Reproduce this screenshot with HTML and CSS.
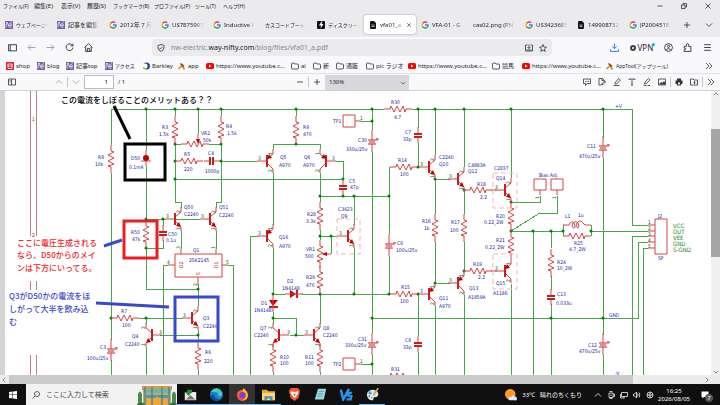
FILE: index.html
```html
<!DOCTYPE html>
<html lang="ja">
<head>
    <meta charset="UTF-8">
    <meta name="viewport" content="width=device-width, initial-scale=1.0">
    <title>vfa01_a.pdf</title>
    <link rel="stylesheet" href="styles.css">
</head>
<body>
    <!-- Shared icons -->
    <svg class="sprite" aria-hidden="true">
        <symbol id="i-google" viewBox="0 0 16 16"><g fill="none" stroke-width="3"><path stroke="#ea4335" d="M3 5a6 6 0 0 1 9.500-1.500"/><path stroke="#fbbc05" d="M3 11a6 6 0 0 1 0-6"/><path stroke="#34a853" d="M3 11a6 6 0 0 0 9.500 1.500"/><path stroke="#4285f4" d="M12.500 12.500A6 6 0 0 0 14 8H8"/></g></symbol>
        <symbol id="i-nifty" viewBox="0 0 16 16"><path fill="#74619f" d="M0 0h16v16H0z"/><path fill="none" stroke="#e4dcf5" stroke-width="1.800" d="M2 13V6q3-3 4 0v3M8 9h5q0-4-3-4t-3 5q1 4 6 2M2 3h4M11 2h3"/></symbol>
        <symbol id="i-doc" viewBox="0 0 16 16"><path fill="#15141a" d="M2 2q0-2 2-2h6l4 4v10q0 2-2 2H4q-2 0-2-2z"/><path stroke="#ddd" stroke-width="1.500" d="M5 8h6M5 11h6"/></symbol>
        <symbol id="i-bolt" viewBox="0 0 16 16"><rect width="16" height="16" rx="2" fill="#111"/><path fill="#fff" d="M9 1 4 9h4l-1 6 6-9H9l2-5z"/></symbol>
        <symbol id="i-yt" viewBox="0 0 16 16"><rect y="2" width="16" height="12" rx="3" fill="#f00"/><path fill="#fff" d="m6 5 5 3-5 3z"/></symbol>
        <symbol id="i-folder" viewBox="0 0 16 16"><path class="line" d="M1 4q0-2 2-2h3l2 2h5q2 0 2 2v6q0 2-2 2H3q-2 0-2-2z"/></symbol>
        <symbol id="i-app" viewBox="0 0 16 16"><path stroke="#d9822b" stroke-width="3" d="m1 14 9-9M7 6l6 9"/><path stroke="#6b4423" stroke-width="3" d="m5 3 7 6"/></symbol>
        <symbol id="i-panel" viewBox="0 0 16 16"><path class="line" d="M1 2h14v12H1zM7 2v12M3 5h2M3 8h2"/></symbol>
        <symbol id="i-up" viewBox="0 0 16 16"><path class="line" d="m2 11 6-6 6 6"/></symbol>
        <symbol id="i-down" viewBox="0 0 16 16"><path class="line" d="m2 5 6 6 6-6"/></symbol>
        <symbol id="i-more" viewBox="0 0 16 16"><path class="line" d="m2 2 6 6-6 6M8 2l6 6-6 6"/></symbol>
        <symbol id="i-plus" viewBox="0 0 16 16"><path class="line" d="M8 2v12M2 8h12"/></symbol>
        <symbol id="i-minus" viewBox="0 0 16 16"><path class="line" d="M2 8h12"/></symbol>
    </svg>

    <header class="chrome">
        <nav class="menubar">
            <a href="#" class="kana">ファイル(F)</a>
            <a href="#">編集(E)</a>
            <a href="#">表示(V)</a>
            <a href="#">履歴(S)</a>
            <a href="#" class="kana">ブックマーク(B)</a>
            <a href="#" class="kana">プロファイル(P)</a>
            <a href="#" class="kana">ツール(T)</a>
            <a href="#" class="kana">ヘルプ(H)</a>
            <div class="window-buttons">
                <button aria-label="最小化"><svg viewBox="0 0 16 16"><path class="line" d="M3 8h10"/></svg></button>
                <button aria-label="元に戻す"><svg viewBox="0 0 16 16"><path class="line" d="M3 6h7v7H3zM6 6V3h7v7h-3"/></svg></button>
                <button aria-label="閉じる"><svg viewBox="0 0 16 16"><path class="line" d="m3 3 10 10M13 3 3 13"/></svg></button>
            </div>
        </nav>

        <div class="tabs">
            <button class="tab"><svg><use href="#i-nifty"/></svg><span class="kana">ウェブページ管</span></button>
            <button class="tab"><svg><use href="#i-nifty"/></svg><span>記事を編集</span></button>
            <button class="tab"><svg><use href="#i-google"/></svg><span>2012年 7 月</span></button>
            <button class="tab"><svg><use href="#i-google"/></svg><span>US7875907</span></button>
            <button class="tab"><svg><use href="#i-google"/></svg><span>Inductive l</span></button>
            <button class="tab"><span class="kana">カスコードブートス</span></button>
            <button class="tab"><svg><use href="#i-bolt"/></svg><span class="kana">ディスクリート</span></button>
            <button class="tab active"><svg><use href="#i-doc"/></svg><span>vfa01_a.</span><svg class="close" viewBox="0 0 16 16"><path class="line" d="m3 3 10 10M13 3 3 13"/></svg></button>
            <button class="tab"><svg><use href="#i-google"/></svg><span>VFA-01 - G</span></button>
            <button class="tab"><span>cas02.png (PN</span></button>
            <button class="tab"><svg><use href="#i-google"/></svg><span>US3423685</span></button>
            <button class="tab"><svg><use href="#i-doc"/></svg><span>149908732</span></button>
            <button class="tab"><svg><use href="#i-google"/></svg><span>JP2004515</span></button>
            <button class="tab-tool" aria-label="新しいタブ"><svg><use href="#i-plus"/></svg></button>
            <button class="tab-tool" aria-label="タブ一覧"><svg><use href="#i-down"/></svg></button>
        </div>

        <div class="navbar">
            <div class="nav-buttons">
                <button aria-label="サイドバー"><svg viewBox="0 0 16 16"><path class="line" d="M1 3h14v11H1zM4 3v11"/></svg></button>
                <button aria-label="戻る" class="dim"><svg viewBox="0 0 16 16"><path class="line" d="M15 8H2m5-5L2 8l5 5"/></svg></button>
                <button aria-label="進む" class="dim"><svg viewBox="0 0 16 16"><path class="line" d="M1 8h13M9 3l5 5-5 5"/></svg></button>
                <button aria-label="再読み込み"><svg viewBox="0 0 16 16"><path class="line" d="M14 8a6 6 0 1 1-2-5l2 2M14 1v4h-4"/></svg></button>
                <button aria-label="ホーム"><svg viewBox="0 0 16 16"><path class="line" d="m1 8 7-7 7 7M3 7v8h10V7M6 15v-5h4v5"/></svg></button>
            </div>
            <div class="urlbar">
                <svg viewBox="0 0 16 16"><path class="line" d="M8 1 2 3v5q1 5 6 7 5-2 6-7V3zM5 8l2 2 4-4"/></svg>
                <a class="url" href="#">nw-electric.<b>way-nifty.com</b>/blog/files/vfa01_a.pdf</a>
                <svg viewBox="0 0 16 16"><path class="line" d="M5 2H1v12h14V2h-4M8 1v8M5 6l3 3 3-3M3 12h10"/></svg>
                <svg viewBox="0 0 16 16"><path class="line" d="m8 1 2 5 5 .5-4 3.500 1.500 5L8 12l-4.500 3L5 10 1 6.500 6 6z"/></svg>
            </div>
            <div class="nav-tools">
                <button aria-label="ダウンロード" class="download"><svg viewBox="0 0 16 16"><path class="line" d="M8 1v9M4 6l4 4 4-4M1 11v4h14v-4"/></svg></button>
                <button class="vpn"><i></i>VPN</button>
                <button aria-label="アカウント"><svg viewBox="0 0 16 16"><circle class="line" cx="8" cy="8" r="7"/><circle class="line" cx="8" cy="6" r="2"/><path class="line" d="M4 12q4-4 8 0"/></svg></button>
                <button aria-label="拡張機能"><svg viewBox="0 0 16 16"><path class="line" d="M2 6h4V4q0-3 2-3t2 3v2h4v9H2v-3q3 0 3-1.500T2 9z"/></svg></button>
                <button aria-label="メニュー"><svg viewBox="0 0 16 16"><path class="line" d="M2 3h12M2 8h12M2 13h12"/></svg></button>
            </div>
        </div>

        <nav class="bookmarks">
            <a href="#"><svg viewBox="0 0 16 16"><path fill="#d5222b" d="M0 0h16v16H0z"/><path fill="none" stroke="#fff" stroke-width="1.500" d="M3 4h10M3 8h10M4 4v9h8V4"/></svg>shop</a>
            <a href="#"><svg><use href="#i-nifty"/></svg>blog</a>
            <a href="#"><svg><use href="#i-nifty"/></svg>記事top</a>
            <a href="#" class="kana"><svg><use href="#i-nifty"/></svg>アクセス</a>
            <a href="#"><svg viewBox="0 0 16 16"><circle cx="9" cy="8" r="7" fill="#1d4f91"/><circle cx="6" cy="8" r="5" fill="#fff"/><path fill="#d8b12c" d="M1 11q5 6 10 3-5 0-7-5z"/></svg>Barkley</a>
            <a href="#"><svg><use href="#i-app"/></svg>app</a>
            <a href="#"><svg><use href="#i-yt"/></svg>https://www.youtube.c...</a>
            <a href="#"><svg><use href="#i-folder"/></svg>ai</a>
            <a href="#"><svg><use href="#i-folder"/></svg>新</a>
            <a href="#"><svg><use href="#i-folder"/></svg>通販</a>
            <a href="#"><svg><use href="#i-folder"/></svg>pic ラジオ</a>
            <a href="#"><svg><use href="#i-yt"/></svg>https://www.youtube.c...</a>
            <a href="#"><svg><use href="#i-folder"/></svg>競馬</a>
            <a href="#"><svg><use href="#i-yt"/></svg>https://www.youtube.c...</a>
            <a href="#" class="kana"><svg><use href="#i-app"/></svg><span>AppTool(アップツール)</span></a>
            <button aria-label="その他"><svg><use href="#i-more"/></svg></button>
        </nav>

        <div class="pdf-toolbar">
            <div class="pdf-left">
                <button aria-label="サイドバー切替" class="toggle"><svg><use href="#i-panel"/></svg></button>
                <button aria-label="前のページ" class="dim"><svg><use href="#i-up"/></svg></button>
                <i class="sep"></i>
                <button aria-label="次のページ" class="dim"><svg><use href="#i-down"/></svg></button>
                <input type="text" value="1" aria-label="ページ">
                <span>/ 1</span>
            </div>
            <div class="pdf-zoom">
                <button aria-label="縮小"><svg><use href="#i-minus"/></svg></button>
                <i class="sep"></i>
                <button aria-label="拡大"><svg><use href="#i-plus"/></svg></button>
                <div class="zoom-select">
                    <select aria-label="ズーム"><option>130%</option></select>
                    <svg><use href="#i-down"/></svg>
                </div>
            </div>
            <div class="pdf-tools">
                <button aria-label="コメント"><svg viewBox="0 0 16 16"><path class="line" d="M1 2h14v9H8l-3 4v-4H1zM4 7h2m1 0h2m1 0h2"/></svg></button>
                <button aria-label="署名"><svg viewBox="0 0 16 16"><path class="line" d="M13 6V5L9 1H2v13h4M8 1v4h4M7 14l1-3 6-5 1 2-5 5z"/></svg></button>
                <button aria-label="ハイライト"><svg viewBox="0 0 16 16"><path class="line" d="m4 10 7-9 4 3-8 8H4zM1 15h12"/></svg></button>
                <button aria-label="テキスト"><svg viewBox="0 0 16 16"><path class="line" d="M2 4V2h12v2M8 2v12M6 14h4"/></svg></button>
                <button aria-label="描画"><svg viewBox="0 0 16 16"><path class="line" d="m3 12 1-4 7-7 3 3-7 7zM1 15h6m2 0h5"/></svg></button>
                <button aria-label="画像"><svg viewBox="0 0 16 16"><path class="line" d="M1 2h14v12H1z"/><path fill="#333" d="m2 13 4-5 3 2 3-4 2 3v4z"/></svg></button>
                <i class="sep"></i>
                <button aria-label="印刷"><svg viewBox="0 0 16 16"><path fill="#333" d="M4 1h8v4h3v7h-3v3H4v-3H1V5h3z"/><path fill="#eee" d="M6 9h4v4H6z"/></svg></button>
                <button aria-label="保存"><svg viewBox="0 0 16 16"><path class="line" d="M1 2h5l2 2h7v10H1zM9 6v5M7 9l2 2 2-2"/></svg></button>
                <i class="sep"></i>
                <button aria-label="ツール"><svg><use href="#i-more"/></svg></button>
            </div>
        </div>
    </header>

    <main class="viewer">
        <svg class="schematic" viewBox="0 91 711 284" preserveAspectRatio="xMinYMin slice">
            <defs>
                <g id="res"><path d="M0-14V-8l3 1-6 3 6 3-6 3 6 3-6 2 3 1V14"/></g>
                <g id="resh"><path d="M-14 0H-8l1-3 3 6 3-6 3 6 3-6 2 6 1-3H14"/></g>
                <g id="cap"><path d="M0-8V-1M0 2V8"/><path class="thick" d="M-4-1H4M-4 2H4"/></g>
                <g id="ecap"><path d="M0-12V-2M0 2V10M5-4v3M4-3h3"/><path class="plate" d="M-4-2H4M-4 2H4M-3 0H3"/></g>
                <g id="npn"><path d="M-10 0H0M0-2 6-7V-12M0 2 6 8V12"/><path class="thick" d="M0-6V6"/><path class="solid" d="m6 8-5-1 3-4z"/></g>
                <g id="pnp"><path d="M-10 0H0M0-2 6-7V-12M0 2 6 8V12"/><path class="thick" d="M0-6V6"/><path class="solid" d="m0-2 5-1-3-4z"/></g>
            </defs>

            <path class="paper" d="M5 91h706v284H5z"/>
            <path class="frame" d="M30 91V236M36 91V236M30 281V290M36 281V290M30 355V375M36 355V375"/>

            <!-- Wires -->
            <g class="wire">
                <path d="M111 145V109H384M412 109H632V225H648M111 173V340M111 360V375"/>
                <path d="M146 109V150M146 166V219M146 219H165M163 219V226M163 240V248H146V289H198"/>
                <path d="M175 109V116M175 144V202H181V208M221 109V116M221 144V202H216V208M198 109V134"/>
                <path d="M175 144H181M209 144H221M220 161H257M175 219H200M181 231V249M216 231V249M175 179H343M336 161H343V179"/>
                <path d="M296 109V116M296 144H273V149M296 144H320V149M273 173V225M320 173V202"/>
                <path d="M320 196H389M389 196V167M354 196V225M354 248V294M320 230V240M320 236H338M331 236V254"/>
                <path d="M258 236H250V375M273 248V294M273 312V324M273 318H296V335M290 335H304"/>
                <path d="M273 294H285M302 294H389M320 294V324M320 372V375M273 372V375"/>
                <path d="M372 109V130M372 152V333M372 355V375M361 121H372M361 364H372M372 318H638V242H648"/>
                <path d="M389 196V234M389 256V294M418 109V128M418 143V167M418 294V336M418 352V375"/>
                <path d="M435 109V155M435 179V214M435 242V283M435 306V375M435 179H450M435 283H450"/>
                <path d="M464 109V167M464 190V214M464 242V271M464 295V375"/>
                <path d="M511 109V178M511 202H540V196M511 231 540 213H557V196M511 231H563M511 284V375"/>
                <path d="M533 231V375M551 231V248M551 276V290M551 304V375M563 225V236M591 225V236M591 231H648"/>
                <path d="M603 109V138M603 158V335M603 355V375M648 236H632V375M648 248H643V375"/>
                <path d="M139 318H183M146 318V324M146 347V375M160 335H198M198 289V306M198 330V342M198 370V375"/>
                <path d="M168 265H163V375M228 265H233V375M198 284V289"/>
            </g>

            <!-- Junctions -->
            <path class="dots" d="M146 109h0M175 109h0M198 109h0M221 109h0M296 109h0M372 109h0M418 109h0M435 109h0M464 109h0M511 109h0M603 109h0M175 144h0M221 144h0M175 161h0M221 161h0M175 179h0M146 219h0M163 219h0M146 248h0M198 289h0M198 335h0M111 318h0M146 318h0M296 144h0M343 179h0M320 196h0M343 196h0M354 196h0M389 196h0M320 236h0M331 236h0M273 294h0M320 294h0M354 294h0M389 294h0M273 318h0M296 335h0M372 121h0M372 318h0M372 364h0M418 167h0M418 294h0M435 179h0M435 283h0M464 190h0M464 271h0M511 202h0M511 231h0M533 231h0M551 231h0M563 231h0M591 231h0M551 318h0M603 318h0"/>

            <!-- Parts -->
            <g class="part">
                <use href="#res" x="111" y="159"/>
                <use href="#res" x="175" y="130"/>
                <use href="#res" x="221" y="130"/>
                <use href="#res" x="146" y="234"/>
                <use href="#res" x="296" y="130"/>
                <use href="#res" x="320" y="216"/>
                <use href="#res" x="320" y="254"/>
                <use href="#res" x="320" y="280"/>
                <use href="#res" x="198" y="356"/>
                <use href="#res" x="273" y="358"/>
                <use href="#res" x="320" y="358"/>
                <use href="#res" x="435" y="228"/>
                <use href="#res" x="464" y="228"/>
                <use href="#res" x="511" y="216"/>
                <use href="#res" x="511" y="245"/>
                <use href="#res" x="551" y="263"/>
                <use href="#resh" x="195" y="144"/>
                <use href="#resh" x="189" y="161"/>
                <use href="#resh" x="125" y="318"/>
                <use href="#resh" x="398" y="109"/>
                <use href="#resh" x="404" y="167"/>
                <use href="#resh" x="404" y="294"/>
                <use href="#resh" x="398" y="376"/>
                <use href="#resh" x="478" y="190"/>
                <use href="#resh" x="478" y="271"/>
                <use href="#resh" x="577" y="236"/>
                <use href="#cap" x="163" y="233"/>
                <use href="#cap" x="343" y="187"/>
                <use href="#cap" x="418" y="135"/>
                <use href="#cap" x="418" y="344"/>
                <use href="#cap" x="551" y="297"/>
                <use href="#cap" transform="translate(212 161) rotate(90)"/>
                <use href="#ecap" x="111" y="351"/>
                <use href="#ecap" x="372" y="142"/>
                <use href="#ecap" x="372" y="345"/>
                <use href="#ecap" x="389" y="246"/>
                <use href="#ecap" x="603" y="148"/>
                <use href="#ecap" x="603" y="345"/>
                <use href="#npn" x="175" y="219"/>
                <use href="#npn" x="210" y="219"/>
                <use href="#npn" x="192" y="318"/>
                <use href="#npn" transform="translate(152 335) scale(-1 1)"/>
                <use href="#npn" transform="translate(279 335) scale(-1 1)"/>
                <use href="#npn" x="314" y="335"/>
                <use href="#npn" x="348" y="236"/>
                <use href="#npn" x="429" y="167"/>
                <use href="#npn" x="458" y="179"/>
                <use href="#npn" x="505" y="190"/>
                <use href="#pnp" x="267" y="161"/>
                <use href="#pnp" transform="translate(326 161) scale(-1 1)"/>
                <use href="#pnp" x="267" y="236"/>
                <use href="#pnp" x="429" y="294"/>
                <use href="#pnp" x="458" y="283"/>
                <use href="#pnp" x="505" y="271"/>
                <!-- Q1, test points, bias header, output connector -->
                <path d="M175 254h47v23h-47zM181 249v5M216 249v5M198 277v8M168 265h7M222 265h6"/>
                <path d="M343 115h12v12h-12zM355 121h6M343 358h12v12h-12zM355 364h6"/>
                <path d="M534 179h12v11h-12zM551 179h12v11h-12zM540 190v5M557 190v5M491 190h6M491 271h6"/>
                <path d="M655 219h12v35h-12zM648 225h7M648 231h7M648 236h7M648 242h7M648 248h7"/>
                <path d="M563 225h6q2-5 5-2 2 5 0 5-3-1-1-5 3-3 5 0 2 4 0 5-3-1-1-5 4-4 6 0l2 2h6"/>
                <path d="M198 134v8M331 254h-8M146 150v16M141 161h10"/>
                <path class="solid" d="M196 139h4l-2 5zM327 252v4l-5-2zM269 300h9l-5 6zM290 290v8l6-4z"/>
                <path class="thick" d="M269 307h9M297 290v8"/>
                <path d="M273 294v18M285 294h18"/>
                <circle class="solid" cx="146" cy="158" r="3"/>
            </g>
            <path class="dashed" d="M337 219h23v35h-23zM493 173h24v35h-24zM493 254h24v35h-24z"/>

            <!-- Labels -->
            <g class="label">
                <text x="98" y="159">R8</text><text x="95" y="166">10k</text>
                <text x="131" y="160">D50</text><text x="129" y="169">0.1mA</text>
                <text x="162" y="129">R3</text><text x="159" y="136">1.5k</text>
                <text x="201" y="135">VR2</text><text x="203" y="142">50k</text>
                <text x="226" y="128">R4</text><text x="227" y="135">1.5k</text>
                <text x="184" y="156">R5</text><text x="184" y="171">220</text>
                <text x="208" y="155">C4</text><text x="205" y="173">1000p</text>
                <text x="303" y="129">R9</text><text x="303" y="136">470</text>
                <text x="280" y="159">Q5</text><text x="279" y="167">A970</text>
                <text x="304" y="159">Q6</text><text x="303" y="167">A970</text>
                <text x="184" y="209">Q50</text><text x="184" y="216">C2240</text>
                <text x="219" y="209">Q51</text><text x="219" y="217">C2240</text>
                <text x="131" y="234">R50</text><text x="132" y="241">47k</text>
                <text x="168" y="236">C50</text><text x="166" y="242">0.1u</text>
                <text x="193" y="252">Q1</text><text x="189" y="262">2SK2145</text>
                <text x="203" y="320">Q3</text><text x="203" y="328">C2240</text>
                <text x="205" y="354">R6</text><text x="204" y="363">220</text>
                <text x="121" y="313">R7</text><text x="122" y="327">100</text>
                <text x="132" y="338">Q4</text><text x="125" y="346">C2240</text>
                <text x="100" y="349">C3</text><text x="87" y="360">100u/25v</text>
                <text x="307" y="216">R28</text><text x="306" y="223">3.3k</text>
                <text x="338" y="211">C3423</text><text x="341" y="218">Q9</text>
                <text x="306" y="251">VR1</text><text x="305" y="258">500</text>
                <text x="306" y="279">R29</text><text x="306" y="287">470</text>
                <text x="279" y="239">Q16</text><text x="279" y="248">A970</text>
                <text x="287" y="283">D2</text><text x="282" y="290">1N4148</text>
                <text x="261" y="305">D1</text><text x="254" y="312">1N4148</text>
                <text x="260" y="330">Q7</text><text x="254" y="337">C2240</text>
                <text x="323" y="330">Q8</text><text x="323" y="337">C2240</text>
                <text x="280" y="359">R10</text><text x="280" y="365">100</text>
                <text x="305" y="359">R11</text><text x="305" y="365">100</text>
                <text x="333" y="123">TP1</text><text x="333" y="366">TP2</text>
                <text x="391" y="104">R30</text><text x="394" y="119">4.7</text>
                <text x="358" y="142">C30</text><text x="346" y="151">330u/25v</text>
                <text x="405" y="134">C7</text><text x="403" y="141">33p</text>
                <text x="349" y="183">C5</text><text x="350" y="189">47p</text>
                <text x="398" y="162">R14</text><text x="400" y="176">100</text>
                <text x="439" y="159">C2240</text><text x="439" y="166">Q10</text>
                <text x="468" y="167">C4883A</text><text x="468" y="173">Q12</text>
                <text x="494" y="170">C2837</text><text x="496" y="180">Q14</text>
                <text x="477" y="186">R18</text><text x="480" y="199">2.2</text>
                <text x="422" y="223">R16</text><text x="424" y="230">1k</text>
                <text x="451" y="224">R17</text><text x="450" y="232">100</text>
                <text x="496" y="218">R20</text><text x="484" y="224">0.22_2W</text>
                <text x="496" y="242">R21</text><text x="485" y="249">0.22_2W</text>
                <text x="397" y="245">C6</text><text x="396" y="252">100u/25v</text>
                <text x="401" y="289">R15</text><text x="400" y="303">100</text>
                <text x="439" y="300">Q11</text><text x="439" y="308">A970</text>
                <text x="469" y="290">Q13</text><text x="468" y="299">A1859A</text>
                <text x="473" y="266">R19</text><text x="478" y="279">2.2</text>
                <text x="496" y="285">Q15</text><text x="493" y="295">A1186</text>
                <text x="358" y="341">C31</text><text x="345" y="347">330u/25v</text>
                <text x="405" y="342">C8</text><text x="403" y="349">33p</text>
                <text x="391" y="371">R31</text>
                <text x="539" y="177">Bias Adj.</text>
                <text x="587" y="148">C11</text><text x="579" y="158">470u/25v</text>
                <text x="565" y="218">L1</text><text x="578" y="217">1u</text>
                <text x="574" y="245">R25</text><text x="569" y="251">4.7_2W</text>
                <text x="557" y="264">R24</text><text x="557" y="270">10_2W</text>
                <text x="557" y="296">C13</text><text x="556" y="305">0.033u</text>
                <text x="588" y="347">C12</text><text x="579" y="353">470u/25v</text>
                <text x="658" y="218">J2</text><text x="658" y="260">SP</text>
            </g>
            <g class="net">
                <text x="615" y="108">+V</text>
                <text x="609" y="317">GND</text>
                <text x="615" y="375">-V</text>
            </g>
            <g class="port">
                <text x="673" y="228">VCC</text>
                <text x="673" y="234">OUT</text>
                <text x="673" y="240">VEE</text>
                <text x="673" y="246">GND</text>
                <text x="673" y="252">S-GND</text>
            </g>
            <g class="gate">
                <text transform="translate(183 268) rotate(-90)">D2</text>
                <text transform="translate(218 268) rotate(-90)">D1</text>
                <text transform="translate(200 275) rotate(-90)">S</text>
                <text x="32" y="121">1</text>
                <text x="32" y="237">2</text>
            </g>
            <!-- Pin numbers -->
            <g class="pin">
                <text x="166" y="218">3</text><text x="201" y="218">3</text><text x="258" y="160">3</text><text x="332" y="160">3</text>
                <text x="258" y="235">3</text><text x="339" y="235">3</text><text x="420" y="166">3</text><text x="449" y="178">3</text>
                <text x="495" y="189">3</text><text x="495" y="270">3</text><text x="449" y="282">3</text><text x="420" y="293">3</text>
                <text x="183" y="317">3</text><text x="159" y="334">3</text><text x="287" y="334">3</text><text x="305" y="334">3</text>
                <text x="167" y="264">4</text><text x="226" y="264">5</text><text x="360" y="120">1</text><text x="360" y="363">1</text>
                <text transform="translate(180 213) rotate(-90)">2</text><text transform="translate(180 230) rotate(-90)">1</text>
                <text transform="translate(215 213) rotate(-90)">2</text><text transform="translate(215 230) rotate(-90)">1</text>
                <text transform="translate(272 155) rotate(-90)">1</text><text transform="translate(272 172) rotate(-90)">2</text>
                <text transform="translate(319 155) rotate(-90)">1</text><text transform="translate(319 172) rotate(-90)">2</text>
                <text transform="translate(272 230) rotate(-90)">1</text><text transform="translate(272 247) rotate(-90)">2</text>
                <text transform="translate(353 230) rotate(-90)">2</text><text transform="translate(353 247) rotate(-90)">1</text>
                <text transform="translate(434 161) rotate(-90)">2</text><text transform="translate(434 178) rotate(-90)">1</text>
                <text transform="translate(463 173) rotate(-90)">2</text><text transform="translate(463 190) rotate(-90)">1</text>
                <text transform="translate(510 184) rotate(-90)">2</text><text transform="translate(510 201) rotate(-90)">1</text>
                <text transform="translate(434 288) rotate(-90)">1</text><text transform="translate(434 305) rotate(-90)">2</text>
                <text transform="translate(463 277) rotate(-90)">1</text><text transform="translate(463 294) rotate(-90)">2</text>
                <text transform="translate(510 265) rotate(-90)">1</text><text transform="translate(510 282) rotate(-90)">2</text>
                <text transform="translate(197 312) rotate(-90)">2</text><text transform="translate(197 329) rotate(-90)">1</text>
                <text transform="translate(145 329) rotate(-90)">2</text><text transform="translate(145 346) rotate(-90)">1</text>
                <text transform="translate(272 329) rotate(-90)">2</text><text transform="translate(272 346) rotate(-90)">1</text>
                <text transform="translate(319 329) rotate(-90)">2</text><text transform="translate(319 346) rotate(-90)">1</text>
                <text transform="translate(180 249) rotate(-90)">3</text><text transform="translate(215 249) rotate(-90)">1</text>
                <text transform="translate(197 286) rotate(-90)">2</text>
                <text transform="translate(539 199) rotate(-90)">1</text><text transform="translate(556 199) rotate(-90)">1</text>
                <text x="648" y="224">1</text><text x="648" y="230">2</text><text x="648" y="236">3</text><text x="648" y="242">4</text><text x="648" y="248">5</text>
            </g>

            <!-- Hand-drawn notes -->
            <g class="mark">
                <path class="black" d="M125 144h40v36h-40zM114 106l16 33"/>
                <path class="red" d="M124 221h33v37h-33z"/>
                <path class="blue" d="M175 297h43v44h-43zM104 246l18-6M96 303l73 4"/>
            </g>
            <g class="note">
                <text class="ink-black" x="61" y="103">この電流をしぼることのメリットある？？</text>
                <text class="ink-red"><tspan x="17" y="246">ここに電圧生成される</tspan><tspan x="17" y="258">なら、D50からのメイ</tspan><tspan x="17" y="271">ンは下方にいってる。</tspan></text>
                <text class="ink-blue"><tspan x="9" y="299">Q3がD50かの電流をほ</tspan><tspan x="9" y="312">しがって大半を飲み込</tspan><tspan x="9" y="325">む</tspan></text>
            </g>
        </svg>
        <div class="vscroll">
            <svg><use href="#i-up"/></svg>
            <div class="vthumb"></div>
            <svg><use href="#i-down"/></svg>
        </div>
        <div class="hscroll">
            <svg viewBox="0 0 16 16"><path class="line" d="m11 2-6 6 6 6"/></svg>
            <div class="hthumb"></div>
            <svg viewBox="0 0 16 16"><path class="line" d="m5 2 6 6-6 6"/></svg>
        </div>
    </main>

    <footer class="taskbar">
        <button class="start" aria-label="スタート"><svg viewBox="0 0 16 16"><path fill="#fff" d="m0 2 7-1v6H0zM8 1l8-1v7H8zM0 8h7v7l-7-1zM8 8h8v8l-8-1z"/></svg></button>
        <div class="search">
            <svg viewBox="0 0 16 16"><path class="line" d="M1 15 6 10"/><circle class="line" cx="10" cy="6" r="5"/></svg>
            <input type="text" placeholder="ここに入力して検索" aria-label="検索">
            <svg class="doodle" viewBox="0 0 40 20">
                <path fill="#4b8b4a" d="M1 20V9q2-5 4 0v11zM35 20V9q2-5 4 0v11z"/>
                <path fill="#d79b45" d="M5 1h30v4H5z"/><path fill="#63b8b2" d="M6 4h28v4H6z"/>
                <path fill="#c9a27c" d="M6 8h28v12H6z"/><path fill="#4d9c98" d="M9 10h22v3H9z"/>
                <path fill="#f5a62c" d="M10 20v-5q2-3 4 0v5zM17 20v-6q3-4 6 0v6zM26 20v-5q2-3 4 0v5z"/>
                <path stroke="#38776f" stroke-width="1" d="M8 2v18M15 2v18M25 2v18M32 2v18"/>
                <path fill="#2f7542" d="M0 19q4-3 8 0v1H0zM32 19q4-3 8 0v1h-8z"/>
            </svg>
        </div>
        <div class="apps">
            <button class="open" aria-label="メール"><svg viewBox="0 0 16 16"><path fill="#eee" d="M1 5h14v10H1z"/><path fill="#38843b" d="M1 5h8l-3 5zM4 2h6v4H4z"/><path fill="#777" d="m2 14 6-5 6 5z"/></svg></button>
            <button class="open" aria-label="Edge"><svg viewBox="0 0 16 16"><circle cx="8" cy="8" r="8" fill="#1681d8"/><path fill="#45cfa5" d="M1 5q7-9 14 1 0 5-5 4 1-5-4-5-3 0-5 0z"/><path fill="#0b4b9b" d="M5 8q0 6 8 6-8 5-12-3 0-3 4-3z"/></svg></button>
            <button class="open current" aria-label="Firefox"><svg viewBox="0 0 16 16"><circle cx="8" cy="9" r="7" fill="#ff6a2b"/><path fill="#ffbd2e" d="M9 0q7 5 5 12-2 3-5 3 5-6 0-9-1-3 0-6z"/><circle cx="8" cy="9" r="4" fill="#8040c9"/><path fill="#ff3f4f" d="M1 7q1 9 9 8-5-1-6-6z"/></svg></button>
            <button class="open" aria-label="エクスプローラー"><svg viewBox="0 0 16 16"><path fill="#e9a92b" d="M0 2h6l2 2h8v11H0z"/><path fill="#ffd865" d="M0 6h16v9H0z"/><path fill="#3c91d8" d="M3 10h10v5h-3v-2H6v2H3z"/></svg></button>
            <button aria-label="Brave"><svg viewBox="0 0 16 16"><path fill="#fb542b" d="m4 0h8l3 3-2 9-5 4-5-4-2-9z"/><path fill="#fff" d="m4 4 4 1 4-1 1 2-3 4-2 3-2-3-3-4z"/><path fill="#fb542b" d="m8 10-2-3h4z"/></svg></button>
            <button aria-label="メモ帳"><svg viewBox="0 0 16 16"><path fill="#9ed8e7" d="M5 1h10l-3 13H1z"/><path stroke="#4b92a6" d="M6 4h6M5 7h6M4 10h6"/></svg></button>
            <button aria-label="KS"><svg viewBox="0 0 16 16"><path fill="none" stroke="#2397ee" stroke-width="3" d="m1 2 3 12L11 1M15 6h-4l-1 3 4 1-1 4H8"/></svg></button>
            <button class="open" aria-label="ペイント"><svg viewBox="0 0 16 16"><path fill="#d9e9f2" d="M1 8q1-6 8-6 7 1 6 7-1 3-4 2-2 0-2 4-7 1-8-7z"/><circle cx="5" cy="6" r="2" fill="#39a0e5"/><circle cx="4" cy="10" r="1" fill="#e33"/><circle cx="7" cy="12" r="1" fill="#3a3"/><path stroke="#e69a3c" stroke-width="2" d="m15 0-6 9"/></svg></button>
        </div>
        <div class="weather">
            <svg viewBox="0 0 16 16"><circle cx="7" cy="7" r="7" fill="#ff9d1e"/><path fill="#dce9fb" d="M6 15q-3-1-1-4 2-1 3 0 2-4 5-1 3 0 3 3t-3 2z"/></svg>
            <span>33℃</span>
            <span>晴れのちくもり</span>
        </div>
        <div class="tray">
            <svg><use href="#i-up"/></svg>
            <svg viewBox="0 0 16 16"><path class="line" d="M4 4h8v9H4zM5 1h6M5 15h6M8 7v3M12 6h3v5h-3"/></svg>
            <svg viewBox="0 0 16 16"><path class="line" d="M3 3h12v8H3zM1 6v8h8M8 11v3"/></svg>
            <svg viewBox="0 0 16 16"><path class="line" d="M1 6h2l4-4v12l-4-4H1zM9 5q2 3 0 6M12 3q3 5 0 10"/></svg>
            <svg viewBox="0 0 16 16"><circle class="line" cx="8" cy="8" r="6"/><circle class="line" cx="8" cy="8" r="2"/><path class="line" d="M8 2v4M8 10v4M2 8h4M10 8h4"/></svg>
        </div>
        <div class="clock"><span>16:25</span><span>2026/08/05</span></div>
        <button class="notice" aria-label="通知"><svg viewBox="0 0 16 16"><path fill="#fff" d="M1 1h14v11H6l-3 3v-3H1z"/></svg><span>7</span></button>
    </footer>
</body>
</html>
```

FILE: styles.css
```css
* {
    box-sizing: border-box;
}

body {
    margin: 0;
    min-height: 100vh;
    display: flex;
    flex-direction: column;
    font-family: "Noto Sans", "Noto Sans CJK JP", sans-serif;
    font-size: 6px;
    line-height: 8px;
    color: #25242c;
    background-color: #f9f9fb;
}

button {
    display: flex;
    align-items: center;
    justify-content: center;
    padding: 0;
    border: none;
    background: none;
    font: inherit;
    color: inherit;
}

a {
    color: inherit;
    text-decoration: none;
    white-space: nowrap;
}

svg {
    display: block;
    flex: none;
    width: 8px;
    height: 8px;
}

.sprite {
    position: absolute;
    width: 0;
    height: 0;
}

.line {
    fill: none;
    stroke: currentColor;
    stroke-width: 1.5;
}

.kana {
    font-size: 5px;
}

/* Menu bar and tabs */
.menubar {
    display: grid;
    grid-template-columns: 31px 27px 26px 26px 41px 41px 28px 28px 1fr;
    align-items: center;
    height: 12px;
    padding-left: 3px;
    background-color: #ebebee;
}

.window-buttons {
    display: flex;
    justify-content: flex-end;
    gap: 16px;
    padding-right: 8px;
}

.tabs {
    display: flex;
    align-items: center;
    height: 25px;
    background-color: #ebebee;
}

.tab {
    flex: 0 1 52px;
    min-width: 0;
    height: 19px;
    padding: 0 4px 0 5px;
    gap: 3px;
    justify-content: flex-start;
    border-radius: 3px;
}

.tab span {
    flex: 1;
    min-width: 0;
    overflow: hidden;
    white-space: nowrap;
    text-align: left;
    mask-image: linear-gradient(to right, #000 70%, transparent);
}

.tab.active {
    background-color: #fff;
    box-shadow: 0 0 2px rgba(0, 0, 0, 0.4);
}

.tab .close {
    width: 6px;
    height: 6px;
}

.tab-tool {
    width: 22px;
}

/* Address bar */
.navbar {
    display: flex;
    align-items: center;
    height: 21px;
    padding: 0 8px;
}

.nav-buttons {
    display: flex;
    gap: 10px;
    width: 144px;
}

.dim {
    color: #92929a;
}

.download {
    color: #0a6df0;
}

.urlbar {
    display: flex;
    align-items: center;
    flex: 1;
    gap: 6px;
    height: 17px;
    padding: 0 5px;
    border-radius: 4px;
    background-color: #ebebee;
}

.url {
    flex: 1;
    font-size: 7px;
    color: #85858d;
}

.url b {
    font-weight: 400;
    color: #15141a;
}

.nav-tools {
    display: flex;
    align-items: center;
    justify-content: space-between;
    width: 160px;
    padding-left: 58px;
}

.nav-tools svg,
.nav-buttons svg {
    width: 9px;
    height: 9px;
}

.vpn {
    gap: 2px;
    font-size: 8px;
    position: relative;
}

.vpn i {
    width: 6px;
    height: 6px;
    border: 2px solid #44434b;
    border-radius: 50%;
}

.vpn::after {
    content: "";
    position: absolute;
    top: -1px;
    right: -2px;
    width: 3px;
    height: 3px;
    border-radius: 50%;
    background-color: #00b3f4;
}

/* Bookmarks */
.bookmarks {
    display: grid;
    grid-template-columns: 31px 29px 39px 37px 36px 28px 85px 22px 23px 30px 42px 84px 30px 84px 1fr 10px;
    align-items: center;
    height: 15px;
    padding: 0 6px;
    overflow: hidden;
}

.bookmarks a {
    display: flex;
    align-items: center;
    gap: 2px;
}

/* PDF toolbar */
.pdf-toolbar {
    display: grid;
    grid-template-columns: 296px 1fr auto;
    align-items: center;
    height: 18px;
    padding: 0 5px 0 8px;
    border-top: 1px solid #e2e2e6;
    border-bottom: 1px solid #cfcfd4;
}

.pdf-left,
.pdf-zoom,
.pdf-tools {
    display: flex;
    align-items: center;
    gap: 4px;
}

.pdf-left .toggle {
    margin-right: 35px;
}

.pdf-left input {
    width: 30px;
    height: 14px;
    padding: 0 5px;
    border: 1px solid #bbbbc2;
    font: inherit;
    text-align: right;
    background-color: #fff;
}

.pdf-zoom {
    margin-left: -8px;
}

.pdf-tools {
    gap: 7px;
}

.pdf-tools .sep {
    margin: 0 -3px;
}

.sep {
    width: 1px;
    height: 10px;
    background-color: #c4c4ca;
}

.zoom-select {
    position: relative;
    width: 84px;
}

.zoom-select select {
    display: block;
    width: 100%;
    height: 15px;
    padding: 0 4px;
    border: none;
    appearance: none;
    font: inherit;
    color: inherit;
    background-color: #d7d7dc;
}

.zoom-select svg {
    position: absolute;
    top: 5px;
    right: 3px;
    width: 6px;
    height: 6px;
}

/* Document */
.viewer {
    flex: 1;
    min-height: 0;
    display: grid;
    grid-template-columns: 1fr 9px;
    grid-template-rows: 1fr 9px;
    background-color: #d4d4d7;
}

.schematic {
    width: 100%;
    height: 100%;
    font-family: "DejaVu Sans Condensed", "DejaVu Sans", sans-serif;
    font-stretch: condensed;
    font-size: 5px;
}

.paper {
    fill: #fff;
}

.frame {
    fill: none;
    stroke: #c08080;
    shape-rendering: crispEdges;
}

.wire {
    fill: none;
    stroke: #48a848;
}

.wire path {
    shape-rendering: crispEdges;
}

.dots {
    stroke: #008000;
    stroke-width: 3;
    stroke-linecap: round;
}

.part {
    fill: none;
    stroke: #d24444;
}

.thick {
    stroke: #c81e1e;
    stroke-width: 2;
}

.plate {
    stroke: #c81e1e;
    stroke-width: 1;
}

.solid {
    fill: #c00000;
    stroke: none;
}

.dashed {
    fill: none;
    stroke: #f5b5b5;
    stroke-dasharray: 5 3;
}

.label {
    fill: #1c1ca0;
}

.net {
    fill: #1818e8;
}

.port {
    fill: #188a18;
    font-size: 6px;
}

.gate {
    fill: #a02020;
}

.pin {
    fill: #205c20;
}

.mark {
    fill: none;
    stroke-width: 3;
}

.black {
    stroke: #000;
}

.red {
    stroke: #ee1c24;
}

.blue {
    stroke: #3a48cc;
}

.note {
    font-family: "Noto Sans CJK JP", sans-serif;
    font-stretch: normal;
    font-size: 8px;
    font-weight: 500;
}

.ink-black {
    fill: #000;
}

.ink-red {
    fill: #ee1c24;
}

.ink-blue {
    fill: #3a48cc;
}

/* Scroll bars */
.vscroll,
.hscroll {
    display: flex;
    align-items: center;
    justify-content: space-between;
    background-color: #f0f0f0;
}

.vscroll {
    flex-direction: column;
}

.vscroll svg,
.hscroll svg {
    width: 6px;
    height: 6px;
}

.vthumb {
    width: 100%;
    height: 45%;
    margin-bottom: 80px;
    background-color: #a6a6a6;
}

.hscroll {
    grid-column: 1 / -1;
    padding: 0 10px 0 1px;
    background-color: #ececec;
}

.hthumb {
    width: 88%;
    height: 100%;
    margin-right: auto;
    margin-left: 2px;
    background-color: #cacaca;
}

/* Taskbar */
.taskbar {
    display: flex;
    height: 21px;
    color: #fff;
    background-color: #101010;
}

.start {
    width: 26px;
}

.search {
    display: flex;
    align-items: center;
    gap: 6px;
    width: 151px;
    padding-left: 6px;
    color: #333;
    background-color: #f2f2f2;
}

.search input {
    flex: 1;
    min-width: 0;
    padding: 0;
    border: none;
    background: none;
    font: inherit;
    font-size: 7px;
}

.search input::placeholder {
    color: #444;
}

.search .doodle {
    width: 40px;
    height: 20px;
}

.apps {
    display: flex;
}

.apps button {
    width: 26px;
    height: 21px;
    border-bottom: 1px solid transparent;
}

.apps svg {
    width: 13px;
    height: 13px;
}

.apps .open {
    border-bottom-color: #76b9ed;
}

.apps .current {
    background-color: #333;
}

.weather {
    display: flex;
    align-items: center;
    gap: 5px;
    margin-left: auto;
    white-space: nowrap;
}

.weather svg {
    width: 12px;
    height: 12px;
}

.tray {
    display: flex;
    align-items: center;
    gap: 5px;
    padding: 0 4px 0 12px;
}

.clock {
    display: flex;
    flex-direction: column;
    align-items: center;
    justify-content: center;
}

.notice {
    position: relative;
    width: 30px;
}

.notice span {
    position: absolute;
    right: 7px;
    bottom: 3px;
    width: 8px;
    height: 8px;
    border-radius: 50%;
    background-color: #555;
}
```
